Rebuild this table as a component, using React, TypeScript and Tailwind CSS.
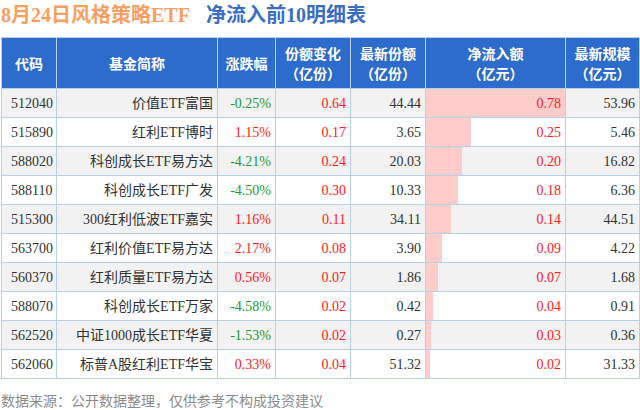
import React from 'react';

type Row = {
  code: string;
  name: string;
  change: string;
  shareChg: string;
  shares: string;
  inflow: number;
  scale: string;
};

const rows: Row[] = [
  { code: '512040', name: '价值ETF富国', change: '-0.25%', shareChg: '0.64', shares: '44.44', inflow: 0.78, scale: '53.96' },
  { code: '515890', name: '红利ETF博时', change: '1.15%', shareChg: '0.17', shares: '3.65', inflow: 0.25, scale: '5.46' },
  { code: '588020', name: '科创成长ETF易方达', change: '-4.21%', shareChg: '0.24', shares: '20.03', inflow: 0.2, scale: '16.82' },
  { code: '588110', name: '科创成长ETF广发', change: '-4.50%', shareChg: '0.30', shares: '10.33', inflow: 0.18, scale: '6.36' },
  { code: '515300', name: '300红利低波ETF嘉实', change: '1.16%', shareChg: '0.11', shares: '34.11', inflow: 0.14, scale: '44.51' },
  { code: '563700', name: '红利价值ETF易方达', change: '2.17%', shareChg: '0.08', shares: '3.90', inflow: 0.09, scale: '4.22' },
  { code: '560370', name: '红利质量ETF易方达', change: '0.56%', shareChg: '0.07', shares: '1.86', inflow: 0.07, scale: '1.68' },
  { code: '588070', name: '科创成长ETF万家', change: '-4.58%', shareChg: '0.02', shares: '0.42', inflow: 0.04, scale: '0.91' },
  { code: '562520', name: '中证1000成长ETF华夏', change: '-1.53%', shareChg: '0.02', shares: '0.27', inflow: 0.03, scale: '0.36' },
  { code: '562060', name: '标普A股红利ETF华宝', change: '0.33%', shareChg: '0.04', shares: '51.32', inflow: 0.02, scale: '31.33' },
];

const maxInflow = 0.78;

export default function App() {
  return (
    <div
      className="relative w-[640px] h-[410px] overflow-hidden bg-white"
      style={{ fontFamily: '"Liberation Serif", "Noto Sans CJK SC", serif' }}
    >
      {/* Title */}
      <div className="h-[37px] pl-[1px] pt-[3px] text-[20px] font-bold leading-[24px] flex">
        <span className="text-[#f8a062]">8月24日风格策略ETF</span>
        <span className="ml-[16px] text-[#3a6ec6]">净流入前10明细表</span>
      </div>

      {/* Table */}
      <table className="ml-[1px] w-[638px] table-fixed border-collapse border-t border-t-[#d0d0d0] text-[14px]">
        <colgroup>
          <col className="w-[55px]" />
          <col className="w-[161px]" />
          <col className="w-[58px]" />
          <col className="w-[75px]" />
          <col className="w-[75px]" />
          <col className="w-[140px]" />
          <col className="w-[74px]" />
        </colgroup>
        <thead>
          <tr className="h-[51px] bg-[#2d6ccc] text-white font-bold leading-[20px]">
            {['代码', '基金简称', '涨跌幅', '份额变化\n（亿份）', '最新份额\n（亿份）', '净流入额\n（亿元）', '最新规模\n（亿元）'].map(h => (
              <th
                key={h}
                className="border border-[#b9d0ea] px-0 text-center whitespace-pre-line font-bold"
                style={{ fontFamily: '"Noto Sans CJK SC", sans-serif' }}
              >
                {h}
              </th>
            ))}
          </tr>
        </thead>
        <tbody className="text-[#333333]">
          {rows.map((r, i) => (
            <tr key={r.code} className={`h-[29px] ${i % 2 === 0 ? 'bg-[#f2f2f2]' : 'bg-white'}`}>
              <td className="border border-[#b9d0ea] pl-[9px] text-left">{r.code}</td>
              <td className="border border-[#b9d0ea] pr-[4px] text-right">{r.name}</td>
              <td className={`border border-[#b9d0ea] pr-[4px] text-right ${r.change.startsWith('-') ? 'text-[#1c9a3c]' : 'text-[#ff1a1a]'}`}>{r.change}</td>
              <td className="border border-[#b9d0ea] pr-[4px] text-right text-[#ff1a1a]">{r.shareChg}</td>
              <td className="border border-[#b9d0ea] pr-[4px] text-right">{r.shares}</td>
              <td className="relative border border-[#b9d0ea] p-0 text-right text-[#ff1a1a]">
                {/* inflow bar, width from data */}
                <div
                  className="absolute left-0 top-0 bottom-0 bg-[#ffcccc]"
                  style={{ width: `${(r.inflow / maxInflow) * 100}%` }}
                />
                <span className="relative pr-[4px]">{r.inflow.toFixed(2)}</span>
              </td>
              <td className="border border-[#b9d0ea] pr-[4px] text-right">{r.scale}</td>
            </tr>
          ))}
        </tbody>
      </table>

      {/* Footer */}
      <div
        className="pl-[1px] pt-[11px] text-[14px] leading-[20px] text-[#8c8c8c]"
        style={{ fontFamily: '"Noto Sans CJK SC", sans-serif' }}
      >
        数据来源：公开数据整理，仅供参考不构成投资建议
      </div>
    </div>
  );
}
